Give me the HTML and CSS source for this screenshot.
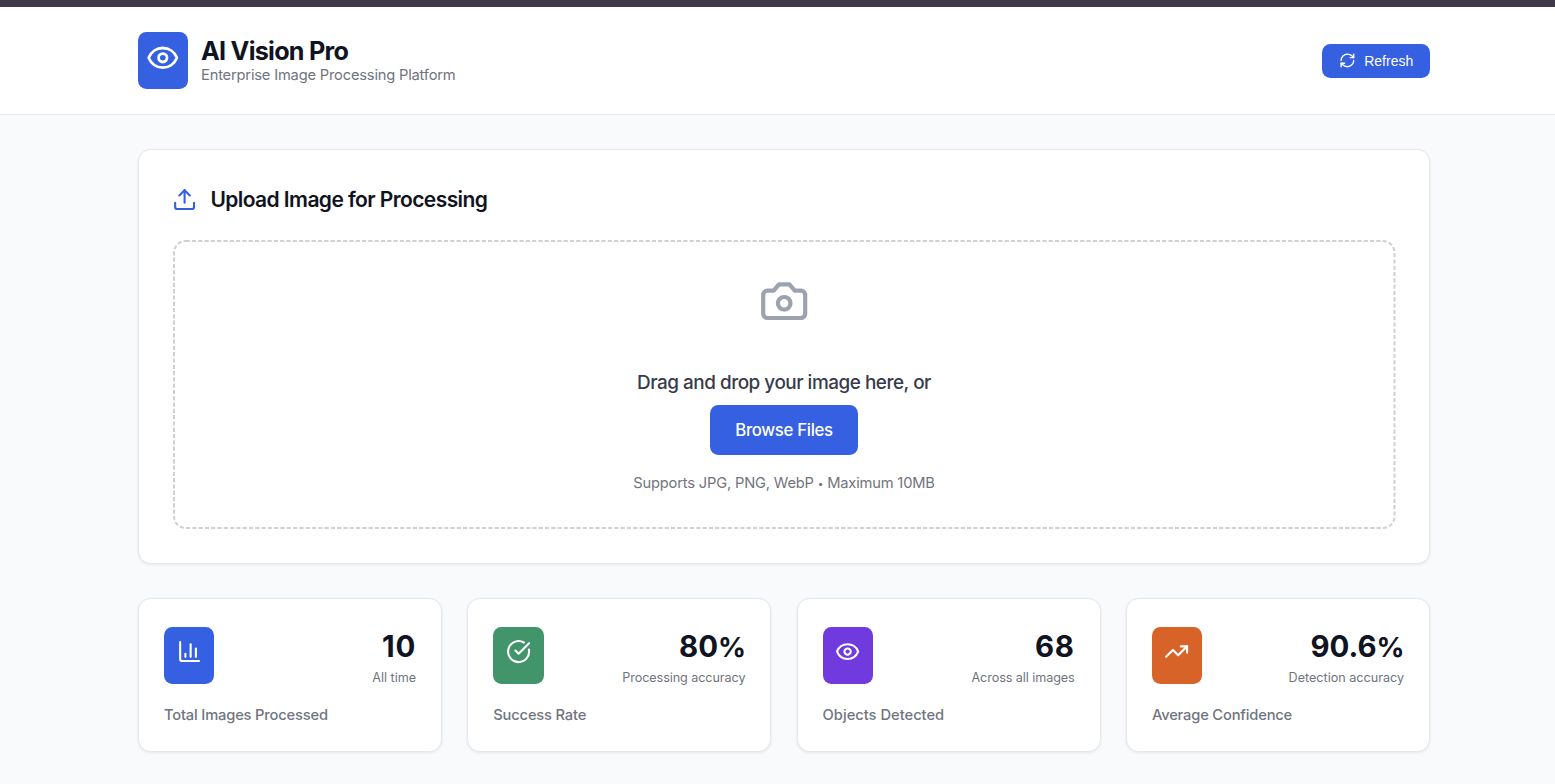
FILE: index.html
```html
<!DOCTYPE html>
<html lang="en">
<head>
<meta charset="utf-8">
<title>AI Vision Pro</title>
<link rel="stylesheet" href="styles.css">
</head>
<body>
<div class="window-edge"></div>
<header class="header">
  <div class="container header-row">
    <div class="brand">
      <div class="logo"><svg class="icon" viewBox="0 0 24 24"><path d="M2.062 12.348a1 1 0 0 1 0-.696 10.75 10.75 0 0 1 19.876 0 1 1 0 0 1 0 .696 10.75 10.75 0 0 1-19.876 0"/><circle cx="12" cy="12" r="3"/></svg></div>
      <div class="brand-text">
        <h1 class="brand-name"><span>AI Vision Pro</span></h1>
        <p class="brand-sub"><span>Enterprise Image Processing Platform</span></p>
      </div>
    </div>
    <button class="refresh"><svg class="icon" viewBox="0 0 24 24"><path d="M3 12a9 9 0 0 1 9-9 9.75 9.75 0 0 1 6.74 2.74L21 8"/><path d="M21 3v5h-5"/><path d="M21 12a9 9 0 0 1-9 9 9.75 9.75 0 0 1-6.74-2.74L3 16"/><path d="M8 16H3v5"/></svg><span>Refresh</span></button>
  </div>
</header>
<main class="container main">
  <section class="card upload">
    <h2 class="upload-title"><svg class="icon" viewBox="0 0 24 24"><path d="M12 3v12"/><path d="m17 8-5-5-5 5"/><path d="M21 15v4a2 2 0 0 1-2 2H5a2 2 0 0 1-2-2v-4"/></svg><span>Upload Image for Processing</span></h2>
    <div class="dropzone">
      <svg class="dash-frame"><rect x="1" y="1" width="1220.500" height="287" rx="11.6"/></svg>
      <svg class="icon camera" viewBox="0 0 24 24"><path d="M14.5 4h-5L7 7H4a2 2 0 0 0-2 2v9a2 2 0 0 0 2 2h16a2 2 0 0 0 2-2V9a2 2 0 0 0-2-2h-3l-2.500-3z"/><circle cx="12" cy="13" r="3"/></svg>
      <p class="drop-text"><span>Drag and drop your image here, or</span></p>
      <button class="browse"><span>Browse Files</span></button>
      <p class="drop-hint"><span>Supports JPG, PNG, WebP <span class="dot">•</span> Maximum 10MB</span></p>
    </div>
  </section>
  <section class="stats">
    <article class="card stat">
      <div class="stat-top">
        <div class="stat-icon blue"><svg class="icon" viewBox="0 0 24 24"><path d="M3 3v16a2 2 0 0 0 2 2h16"/><path d="M18 17V9"/><path d="M13 17V5"/><path d="M8 17v-3"/></svg></div>
        <div class="stat-figures"><p class="stat-value count">10</p><p class="stat-note short">All time</p></div>
      </div>
      <h3 class="stat-label"><span>Total Images Processed</span></h3>
    </article>
    <article class="card stat">
      <div class="stat-top">
        <div class="stat-icon green"><svg class="icon" viewBox="0 0 24 24"><path d="M21.801 10A10 10 0 1 1 17 3.335"/><path d="m9 11 3 3L22 4"/></svg></div>
        <div class="stat-figures"><p class="stat-value">80<span class="unit">%</span></p><p class="stat-note">Processing accuracy</p></div>
      </div>
      <h3 class="stat-label"><span>Success Rate</span></h3>
    </article>
    <article class="card stat">
      <div class="stat-top">
        <div class="stat-icon purple"><svg class="icon" viewBox="0 0 24 24"><path d="M2.062 12.348a1 1 0 0 1 0-.696 10.75 10.75 0 0 1 19.876 0 1 1 0 0 1 0 .696 10.75 10.75 0 0 1-19.876 0"/><circle cx="12" cy="12" r="3"/></svg></div>
        <div class="stat-figures"><p class="stat-value count">68</p><p class="stat-note">Across all images</p></div>
      </div>
      <h3 class="stat-label wide"><span>Objects Detected</span></h3>
    </article>
    <article class="card stat">
      <div class="stat-top">
        <div class="stat-icon orange"><svg class="icon" viewBox="0 0 24 24"><path d="M16 7h6v6"/><path d="m22 7-8.500 8.500-5-5L2 17"/></svg></div>
        <div class="stat-figures"><p class="stat-value">90.6<span class="unit">%</span></p><p class="stat-note short">Detection accuracy</p></div>
      </div>
      <h3 class="stat-label"><span>Average Confidence</span></h3>
    </article>
  </section>
</main>
</body>
</html>
```
FILE: styles.css
```css
* { box-sizing: border-box; margin: 0; padding: 0; }
body { background: #f9fafc; font-family: Inter, "Liberation Sans", sans-serif; color: #101321; height: 784px; overflow: hidden; }
.icon { display: block; fill: none; stroke: currentColor; stroke-width: 2; stroke-linecap: round; stroke-linejoin: round; flex: none; }
.window-edge { height: 7px; background: #3e3948; }
.container { width: 1292px; margin-left: 138px; }
.header { height: 108px; background: #fff; border-bottom: 1px solid #e7e9ec; }
.header-row { display: flex; justify-content: space-between; align-items: center; height: 107px; }
.brand { display: flex; align-items: center; gap: 13px; }
.logo { width: 50px; height: 57px; padding: 8.8px 8.4px; border-radius: 8.4px; background: #3460e1; color: #fff; }
.logo .icon { width: 33.6px; height: 33.6px; }
.brand-text { padding-top: 1px; }
.brand-name { font-size: 25.2px; line-height: 28px; font-weight: 700; letter-spacing: -0.75px; white-space: nowrap; }
.brand-sub { font-size: 14.7px; line-height: 21px; color: #70747e; letter-spacing: -.19px; white-space: nowrap; }
.refresh { display: flex; align-items: center; gap: 8.4px; width: 108px; height: 34px; padding-left: 17px; border: 0; border-radius: 8.4px; background: #3460e1; color: #fff; font: 14px "Liberation Sans", Arial, sans-serif; }
.refresh .icon { width: 16.8px; height: 16.8px; }
.card { background: #fff; border: 1px solid #e5e7eb; border-radius: 12.6px; box-shadow: 0 1px 3px rgba(0,0,0,.08); }
.main { padding-top: 34px; }
.upload { height: 415px; padding: 32px 33.600px; }
.upload-title { display: flex; align-items: center; gap: 13.2px; height: 34px; font-size: 21px; font-weight: 600; letter-spacing: -0.58px; }
.upload-title .icon { width: 25.2px; height: 25.2px; margin: 1px 0 0 -.6px; color: #3460e1; }
.dropzone { position: relative; display: flex; flex-direction: column; align-items: center; height: 289px; margin-top: 24px; padding-top: 35.5px; }
.dash-frame { position: absolute; inset: 0; width: 100%; height: 100%; fill: none; stroke: #cfd1d4; stroke-width: 2; stroke-dasharray: 4.200 2.100; overflow: visible; }
.camera { width: 50.4px; height: 50.4px; color: #9da2af; }
.drop-text { margin-top: 42px; font-size: 18.9px; line-height: 30px; font-weight: 500; color: #373b49; letter-spacing: -.47px; }
.browse { margin-top: 7px; width: 148px; height: 50px; border: 0; border-radius: 8.4px; background: #3460e1; color: #fff; font: 500 16.8px Inter, sans-serif; letter-spacing: -.34px; }
.drop-hint { margin-top: 18px; font-size: 14.7px; line-height: 20px; color: #70747e; letter-spacing: -.18px; }
.dot { font-size: 10px; line-height: 1; vertical-align: 1px; }
.stats { display: grid; grid-template-columns: repeat(4, 1fr); gap: 25.2px; margin-top: 34px; }
.stat { height: 153.500px; padding: 25px; }
.stat-top { display: flex; justify-content: space-between; height: 63px; }
.stat-icon { width: 50.4px; height: 57px; margin-top: 3px; padding: 12px 12.600px; border-radius: 8.4px; color: #fff; }
.stat-icon .icon { width: 25.2px; height: 25.2px; }
.blue { background: #3460e1; }
.green { background: #42946a; }
.purple { background: #713adf; }
.orange { background: #d76329; }
.stat-figures { text-align: right; }
.stat-value { height: 46px; font-size: 29.4px; line-height: 46px; font-weight: 700; }
.count { letter-spacing: .8px; }
.unit { font-size: 27.6px; line-height: 0; letter-spacing: -.6px; }
.stat-note { font-size: 12.6px; line-height: 16px; color: #70747e; letter-spacing: -.07px; }
.stat-note.short { letter-spacing: 0; }
.stat-label { margin-top: 17.500px; font-size: 14.7px; line-height: 20px; font-weight: 500; color: #70747e; letter-spacing: -.17px; }
.stat-label.wide { letter-spacing: 0; }
```
